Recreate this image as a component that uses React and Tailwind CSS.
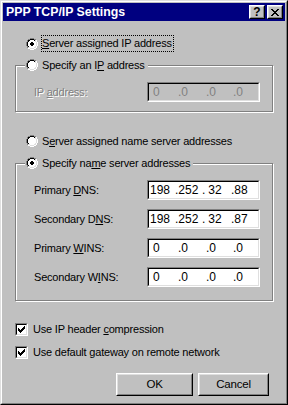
import React from "react";

const range = (a, b) => {
  const r = [];
  for (let i = a; i <= b; i++) r.push(i);
  return r;
};

const OUTER = {
  0: [4, 5, 6, 7], 1: [2, 3, 8, 9], 2: [1, 10], 3: [1, 10], 4: [0, 11], 5: [0, 11],
  6: [0, 11], 7: [0, 11], 8: [1, 10], 9: [1, 10], 10: [2, 3, 8, 9], 11: [4, 5, 6, 7],
};
const INNER = {
  1: [4, 5, 6, 7], 2: [2, 3, 8, 9], 3: [2, 9], 4: [1, 10], 5: [1, 10], 6: [1, 10],
  7: [1, 10], 8: [2, 9], 9: [2, 3, 8, 9], 10: [4, 5, 6, 7],
};
const FILL = {
  2: range(4, 7), 3: range(3, 8), 4: range(2, 9), 5: range(2, 9), 6: range(2, 9),
  7: range(2, 9), 8: range(3, 8), 9: range(4, 7),
};
const DOT = { 4: [5, 6], 5: range(4, 7), 6: range(4, 7), 7: [5, 6] };

function radioPixels(checked) {
  const px = [];
  Object.entries(OUTER).forEach(([y, xs]) =>
    xs.forEach((x) => px.push([x, +y, x + +y < 11 ? "#808080" : "#ffffff"]))
  );
  Object.entries(INNER).forEach(([y, xs]) =>
    xs.forEach((x) => px.push([x, +y, x + +y < 11 ? "#000000" : "#dfdfdf"]))
  );
  Object.entries(FILL).forEach(([y, xs]) => xs.forEach((x) => px.push([x, +y, "#ffffff"])));
  if (checked) Object.entries(DOT).forEach(([y, xs]) => xs.forEach((x) => px.push([x, +y, "#000000"])));
  return px;
}

function Pixels({ w, h, px }) {
  return (
    <svg width={w} height={h} viewBox={`0 0 ${w} ${h}`} shapeRendering="crispEdges" className="shrink-0 block">
      {px.map(([x, y, c], i) => (
        <rect key={i} x={x} y={y} width="1" height="1" fill={c} />
      ))}
    </svg>
  );
}

function Radio({ checked }) {
  return <Pixels w={12} h={12} px={radioPixels(checked)} />;
}

const CHECK = { 0: [6], 1: [5, 6], 2: [0, 4, 5, 6], 3: [0, 1, 3, 4, 5], 4: [0, 1, 2, 3, 4], 5: [1, 2, 3], 6: [2] };
const checkPx = [];
Object.entries(CHECK).forEach(([y, xs]) => xs.forEach((x) => checkPx.push([x + 1, +y + 1, "#000"])));

function Checkbox() {
  return (
    <div className="w-[13px] h-[13px] shrink-0 border border-t-[#808080] border-l-[#808080] border-b-white border-r-white">
      <div className="w-full h-full border border-t-black border-l-black border-b-[#dfdfdf] border-r-[#dfdfdf] bg-white">
        <Pixels w={9} h={9} px={checkPx} />
      </div>
    </div>
  );
}

const X_ROWS = { 0: [0, 1, 6, 7], 1: [1, 2, 5, 6], 2: [2, 3, 4, 5], 3: [3, 4], 4: [2, 3, 4, 5], 5: [1, 2, 5, 6], 6: [0, 1, 6, 7] };
const xPx = [];
Object.entries(X_ROWS).forEach(([y, xs]) => xs.forEach((x) => xPx.push([x, +y, "#000"])));

function TitleButton({ children }) {
  return (
    <div className="w-[16px] h-[14px] border border-t-white border-l-white border-b-black border-r-black">
      <div className="w-full h-full border border-t-[#dfdfdf] border-l-[#dfdfdf] border-b-[#808080] border-r-[#808080] bg-[#c0c0c0] flex items-center justify-center">
        {children}
      </div>
    </div>
  );
}

function Button({ children, w }) {
  return (
    <div className={`${w} h-[23px] border border-t-white border-l-white border-b-black border-r-black`}>
      <div className="w-full h-full border border-t-[#dfdfdf] border-l-[#dfdfdf] border-b-[#808080] border-r-[#808080] bg-[#c0c0c0] flex items-center justify-center text-[11.5px]">
        {children}
      </div>
    </div>
  );
}

function Field({ children, disabled }) {
  return (
    <div className="w-[113px] h-[20px] shrink-0 border border-t-[#808080] border-l-[#808080] border-b-white border-r-white">
      <div
        className={`w-full h-full border border-t-black border-l-black border-b-[#dfdfdf] border-r-[#dfdfdf] flex items-center whitespace-pre text-[12px] tracking-normal ${
          disabled ? "bg-[#c0c0c0] text-[#808080]" : "bg-white text-black"
        }`}
      >
        {children}
      </div>
    </div>
  );
}

function ZeroSegs() {
  return (
    <>
      <span className="w-[29px] pl-[4px]">0</span>
      <span className="w-[28px]">.0</span>
      <span className="w-[27px]">.0</span>
      <span>.0</span>
    </>
  );
}

function DnsSegs({ last }) {
  return (
    <>
      <span className="w-[26px] pl-[1px]">198</span>
      <span className="w-[27px]">.252</span>
      <span className="w-[29px]">
        .<span className="ml-[3px]">32</span>
      </span>
      <span>.{last}</span>
    </>
  );
}

function FieldRow({ label, children, className }) {
  return (
    <div className={`flex items-center pl-[18px] ${className}`}>
      <span className="w-[113px] shrink-0">{label}</span>
      <Field>{children}</Field>
    </div>
  );
}

const groupCls =
  "border border-[#808080] shadow-[inset_1px_1px_0_#fff,1px_1px_0_#fff]";
const legendCls = "-mt-[9px] ml-[9px] w-fit h-[16px] flex items-center pl-[1px] pr-[3px] bg-[#c0c0c0]";

export default function App() {
  return (
    <div className="w-[288px] h-[405px] bg-[#c0c0c0] border border-t-[#dfdfdf] border-l-[#dfdfdf] border-b-black border-r-black text-[11px] tracking-[-0.2px] text-black font-['Liberation_Sans',Arial,sans-serif] leading-none select-none">
      <div className="h-full border border-t-white border-l-white border-b-[#808080] border-r-[#808080] p-[1px] flex flex-col">
        {/* Title bar */}
        <div className="h-[18px] shrink-0 bg-[#000080] flex items-center pl-[3px] pr-[2px]">
          <span className="flex-1 text-white font-bold text-[12.3px] tracking-normal">PPP TCP/IP Settings</span>
          <div className="flex gap-[2px]">
            <TitleButton>
              <span className="font-bold text-[12px] tracking-normal leading-none">?</span>
            </TitleButton>
            <TitleButton>
              <Pixels w={8} h={7} px={xPx} />
            </TitleButton>
          </div>
        </div>

        {/* Content */}
        <div className="px-[12px] flex flex-col">
          <div className="mt-[14px] h-[17px] flex items-center pl-[11px]">
            <Radio checked />
            <span className="ml-[3px] h-full border border-dotted border-black pr-[1px] flex items-center">
              <span><u>S</u>erver assigned IP address</span>
            </span>
          </div>

          <div className={`mt-[13px] pb-[9px] ${groupCls}`}>
            <div className={legendCls}>
              <Radio />
              <span className="ml-[4px]">
                Specify an I<u>P</u> address
              </span>
            </div>
            <div className="mt-[9px] flex items-center pl-[18px]">
              <span className="w-[113px] shrink-0 text-[#808080] [text-shadow:1px_1px_0_#fff]">
                IP <u>a</u>ddress:
              </span>
              <Field disabled>
                <ZeroSegs />
              </Field>
            </div>
          </div>

          <div className="mt-[21px] h-[16px] flex items-center pl-[11px]">
            <Radio />
            <span className="ml-[4px]">
              S<u>e</u>rver assigned name server addresses
            </span>
          </div>

          <div className={`mt-[14px] pb-[13px] ${groupCls}`}>
            <div className={legendCls}>
              <Radio checked />
              <span className="ml-[4px]">
                Specify na<u>m</u>e server addresses
              </span>
            </div>
            <FieldRow className="mt-[9px]" label={<>Primary <u>D</u>NS:</>}>
              <DnsSegs last="88" />
            </FieldRow>
            <FieldRow className="mt-[9px]" label={<>Secondary D<u>N</u>S:</>}>
              <DnsSegs last="87" />
            </FieldRow>
            <FieldRow className="mt-[9px]" label={<>Primary <u>W</u>INS:</>}>
              <ZeroSegs />
            </FieldRow>
            <FieldRow className="mt-[9px]" label={<>Secondary W<u>I</u>NS:</>}>
              <ZeroSegs />
            </FieldRow>
          </div>

          <div className="mt-[20px] h-[16px] flex items-center">
            <Checkbox />
            <span className="ml-[5px]">
              Use IP header <u>c</u>ompression
            </span>
          </div>
          <div className="mt-[7px] h-[16px] flex items-center">
            <Checkbox />
            <span className="ml-[5px]">Use default gateway on remote network</span>
          </div>

          <div className="mt-[13px] flex justify-end gap-[5px] pr-[4px]">
            <Button w="w-[77px]">OK</Button>
            <Button w="w-[71px]">Cancel</Button>
          </div>
        </div>
      </div>
    </div>
  );
}
